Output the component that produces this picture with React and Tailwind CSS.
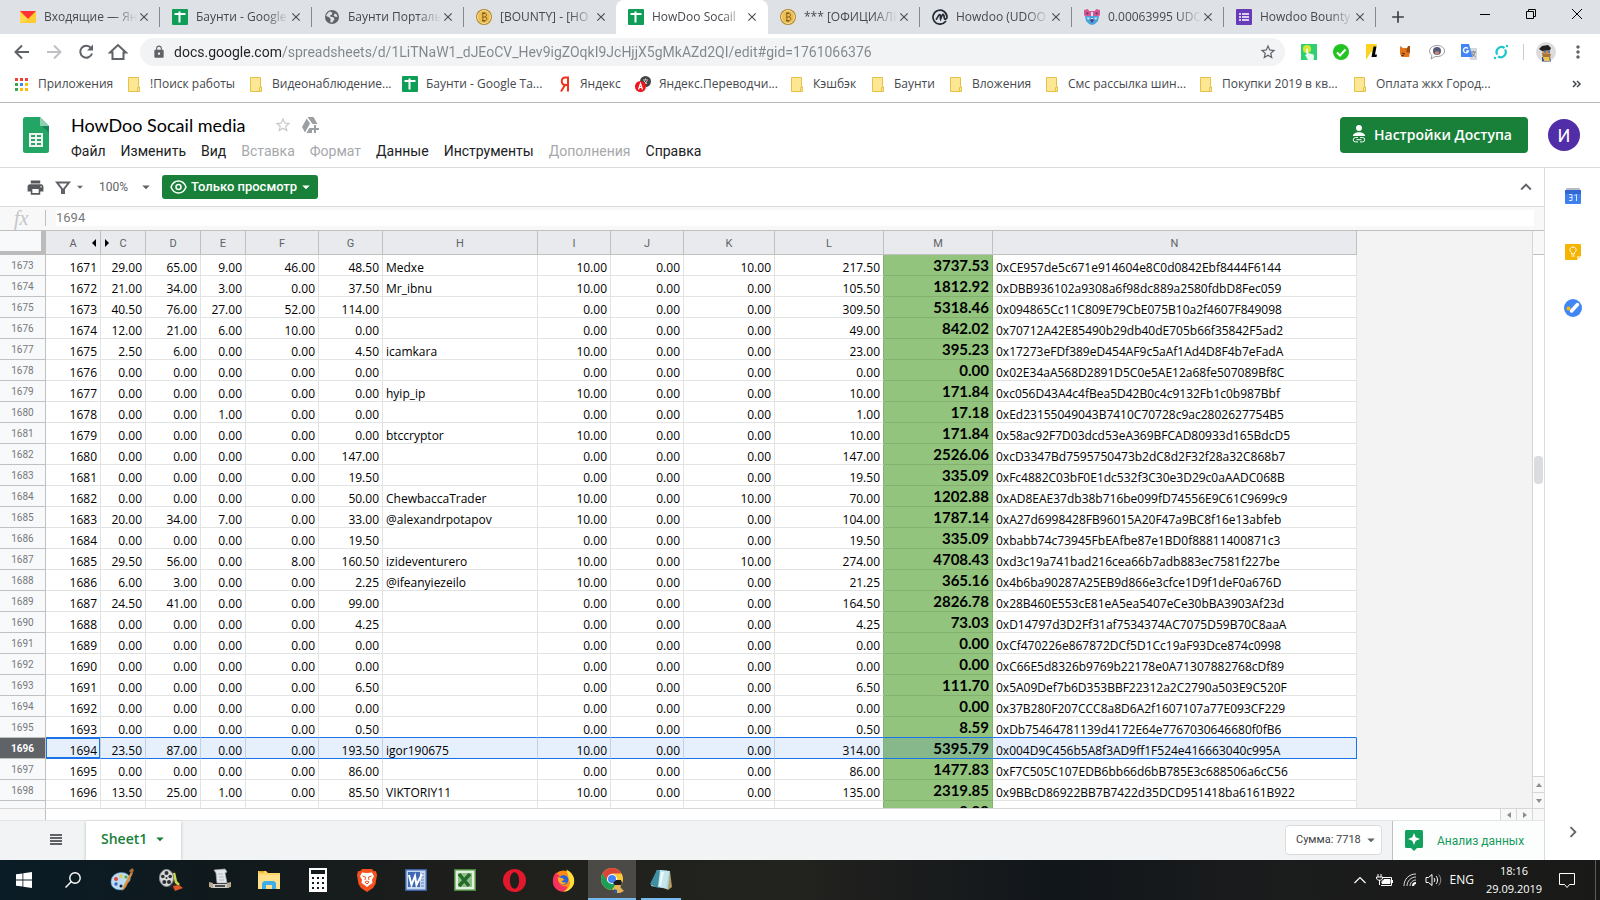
import { MdStarBorder, MdPrint, MdKeyboardArrowUp, MdKeyboardArrowRight, MdArrowDropDown, MdLock, MdClose, MdAdd, MdMoreVert } from 'react-icons/md';

const ROWS = [
  [1673, '1671', '29.00', '65.00', '9.00', '46.00', '48.50', 'Medxe', '10.00', '0.00', '10.00', '217.50', '3737.53', '0xCE957de5c671e914604e8C0d0842Ebf8444F6144'],
  [1674, '1672', '21.00', '34.00', '3.00', '0.00', '37.50', 'Mr_ibnu', '10.00', '0.00', '0.00', '105.50', '1812.92', '0xDBB936102a9308a6f98dc889a2580fdbD8Fec059'],
  [1675, '1673', '40.50', '76.00', '27.00', '52.00', '114.00', '', '0.00', '0.00', '0.00', '309.50', '5318.46', '0x094865Cc11C809E79CbE075B10a2f4607F849098'],
  [1676, '1674', '12.00', '21.00', '6.00', '10.00', '0.00', '', '0.00', '0.00', '0.00', '49.00', '842.02', '0x70712A42E85490b29db40dE705b66f35842F5ad2'],
  [1677, '1675', '2.50', '6.00', '0.00', '0.00', '4.50', 'icamkara', '10.00', '0.00', '0.00', '23.00', '395.23', '0x17273eFDf389eD454AF9c5aAf1Ad4D8F4b7eFadA'],
  [1678, '1676', '0.00', '0.00', '0.00', '0.00', '0.00', '', '0.00', '0.00', '0.00', '0.00', '0.00', '0x02E34aA568D2891D5C0e5AE12a68fe507089Bf8C'],
  [1679, '1677', '0.00', '0.00', '0.00', '0.00', '0.00', 'hyip_ip', '10.00', '0.00', '0.00', '10.00', '171.84', '0xc056D43A4c4fBea5D42B0c4c9132Fb1c0b987Bbf'],
  [1680, '1678', '0.00', '0.00', '1.00', '0.00', '0.00', '', '0.00', '0.00', '0.00', '1.00', '17.18', '0xEd23155049043B7410C70728c9ac2802627754B5'],
  [1681, '1679', '0.00', '0.00', '0.00', '0.00', '0.00', 'btccryptor', '10.00', '0.00', '0.00', '10.00', '171.84', '0x58ac92F7D03dcd53eA369BFCAD80933d165BdcD5'],
  [1682, '1680', '0.00', '0.00', '0.00', '0.00', '147.00', '', '0.00', '0.00', '0.00', '147.00', '2526.06', '0xcD3347Bd7595750473b2dC8d2F32f28a32C868b7'],
  [1683, '1681', '0.00', '0.00', '0.00', '0.00', '19.50', '', '0.00', '0.00', '0.00', '19.50', '335.09', '0xFc4882C03bF0E1dc532f3C30e3D29c0aAADC068B'],
  [1684, '1682', '0.00', '0.00', '0.00', '0.00', '50.00', 'ChewbaccaTrader', '10.00', '0.00', '10.00', '70.00', '1202.88', '0xAD8EAE37db38b716be099fD74556E9C61C9699c9'],
  [1685, '1683', '20.00', '34.00', '7.00', '0.00', '33.00', '@alexandrpotapov', '10.00', '0.00', '0.00', '104.00', '1787.14', '0xA27d6998428FB96015A20F47a9BC8f16e13abfeb'],
  [1686, '1684', '0.00', '0.00', '0.00', '0.00', '19.50', '', '0.00', '0.00', '0.00', '19.50', '335.09', '0xbabb74c73945FbEAfbe87e1BD0f88811400871c3'],
  [1687, '1685', '29.50', '56.00', '0.00', '8.00', '160.50', 'izideventurero', '10.00', '0.00', '10.00', '274.00', '4708.43', '0xd3c19a741bad216cea66b7adb883ec7581f227be'],
  [1688, '1686', '6.00', '3.00', '0.00', '0.00', '2.25', '@ifeanyiezeilo', '10.00', '0.00', '0.00', '21.25', '365.16', '0x4b6ba90287A25EB9d866e3cfce1D9f1deF0a676D'],
  [1689, '1687', '24.50', '41.00', '0.00', '0.00', '99.00', '', '0.00', '0.00', '0.00', '164.50', '2826.78', '0x28B460E553cE81eA5ea5407eCe30bBA3903Af23d'],
  [1690, '1688', '0.00', '0.00', '0.00', '0.00', '4.25', '', '0.00', '0.00', '0.00', '4.25', '73.03', '0xD14797d3D2Ff31af7534374AC7075D59B70C8aaA'],
  [1691, '1689', '0.00', '0.00', '0.00', '0.00', '0.00', '', '0.00', '0.00', '0.00', '0.00', '0.00', '0xCf470226e867872DCf5D1Cc19aF93Dce874c0998'],
  [1692, '1690', '0.00', '0.00', '0.00', '0.00', '0.00', '', '0.00', '0.00', '0.00', '0.00', '0.00', '0xC66E5d8326b9769b22178e0A71307882768cDf89'],
  [1693, '1691', '0.00', '0.00', '0.00', '0.00', '6.50', '', '0.00', '0.00', '0.00', '6.50', '111.70', '0x5A09Def7b6D353BBF22312a2C2790a503E9C520F'],
  [1694, '1692', '0.00', '0.00', '0.00', '0.00', '0.00', '', '0.00', '0.00', '0.00', '0.00', '0.00', '0x37B280F207CCC8a8D6A2f1607107a77E093CF229'],
  [1695, '1693', '0.00', '0.00', '0.00', '0.00', '0.50', '', '0.00', '0.00', '0.00', '0.50', '8.59', '0xDb75464781139d4172E64e7767030646680f0fB6'],
  [1696, '1694', '23.50', '87.00', '0.00', '0.00', '193.50', 'igor190675', '10.00', '0.00', '0.00', '314.00', '5395.79', '0x004D9C456b5A8f3AD9ff1F524e416663040c995A'],
  [1697, '1695', '0.00', '0.00', '0.00', '0.00', '86.00', '', '0.00', '0.00', '0.00', '86.00', '1477.83', '0xF7C505C107EDB6bb66d6bB785E3c688506a6cC56'],
  [1698, '1696', '13.50', '25.00', '1.00', '0.00', '85.50', 'VIKTORIY11', '10.00', '0.00', '0.00', '135.00', '2319.85', '0x9BBcD86922BB7B7422d35DCD951418ba6161B922'],
  ['', '', '', '', '', '', '', '', '', '', '', '', '0.00', ''],
];

const COLUMNS = [
  { name: 'A', width: 'w-[55px]' },
  { name: 'C', width: 'w-[45px]' },
  { name: 'D', width: 'w-[55px]' },
  { name: 'E', width: 'w-[45px]' },
  { name: 'F', width: 'w-[73px]' },
  { name: 'G', width: 'w-[64px]' },
  { name: 'H', width: 'w-[155px]' },
  { name: 'I', width: 'w-[73px]' },
  { name: 'J', width: 'w-[73px]' },
  { name: 'K', width: 'w-[91px]' },
  { name: 'L', width: 'w-[109px]' },
  { name: 'M', width: 'w-[109px]' },
  { name: 'N', width: 'w-[364px]' },
];

const SELECTED = 1696;

/* ---------- small icons ---------- */

function SheetsFavicon() {
  return (
    <svg width="16" height="16" viewBox="0 0 16 16" className="shrink-0">
      <rect width="16" height="16" rx="1" fill="#0f9d58" />
      <path d="M2.500 5h11M7.500 2.500v11" stroke="#fff" strokeWidth="2" />
    </svg>
  );
}

function MailIcon() {
  return (
    <svg width="16" height="16" viewBox="0 0 16 16" className="shrink-0">
      <rect y="2" width="16" height="12" fill="#fc3" />
      <path d="M0 2h16L8 10z" fill="#f33" />
      <path d="M0 14V3l8 7-8 4z" fill="#ffd84d" />
    </svg>
  );
}

function GlobeIcon() {
  return (
    <svg width="16" height="16" viewBox="0 0 16 16" className="shrink-0">
      <circle cx="8" cy="8" r="7" fill="#5f6368" />
      <path d="M6 2.500c-2 1-3.500 2.500-3.800 4.500l3 1.200 1.500 2-.5 3 2 .3 2.300-3.200-1-2-3-.6L6 6.500l2-1 .3-2zM11 4.500l-1.500 1.800 1.500 1.500 2.500.2-.8-2.500z" fill="#dee1e6" />
    </svg>
  );
}

function CoinIcon() {
  return (
    <svg width="16" height="16" viewBox="0 0 16 16" className="shrink-0">
      <circle cx="8" cy="8" r="8" fill="#b8862b" />
      <circle cx="8" cy="8" r="6.500" fill="#e9be55" stroke="#f8e08f" />
      <path d="M6 4.500h3c2 0 2 3.200 0 3.400 2.500 0 2.500 3.600 0 3.600H6M6.800 4.500v7M6.800 8H9M7 3v1.500M8.600 3v1.500M7 11.500V13M8.600 11.500V13" stroke="#8a5d12" strokeWidth="1" fill="none" />
    </svg>
  );
}

function CoinMarketIcon() {
  return (
    <svg width="16" height="16" viewBox="0 0 16 16" className="shrink-0" fill="none" stroke="#222a35" strokeWidth="1.700" strokeLinecap="round">
      <path d="M13.500 12.500A7 7 0 1 1 15 8c0 2.500-2.800 3-2.800.6 0-2-.6-3.600-1.600-3-.9.600-1.300 3-2 4.400-.4-1.600.2-4.400-1-4.400-1.300 0-2 3.400-3.200 4.600" />
    </svg>
  );
}

function BearIcon() {
  return (
    <svg width="16" height="16" viewBox="0 0 16 16" className="shrink-0">
      <path d="M0 1l4-1 1 2h6l1-2 4 1v5l-2 2H2L0 6z" fill="#d9568f" />
      <path d="M1 7h14l-1 5-3 3-3 1-3-1-3-3z" fill="#4aa3dc" />
      <path d="M2 3l3 1-2 2zM14 3l-3 1 2 2zM6 11l2-1 2 1-2 3z" fill="#5b3a78" />
      <path d="M7 3h2v4H7zM3 8l3 1-2 2zM13 8l-3 1 2 2zM7 9h2v1H7z" fill="#cfe3f5" />
    </svg>
  );
}

function FormsIcon() {
  return (
    <svg width="16" height="16" viewBox="0 0 16 16" className="shrink-0">
      <rect width="16" height="16" rx="1" fill="#673ab7" />
      <path d="M3 5h2M3 8h2M3 11h2M6 5h7M6 8h7M6 11h7" stroke="#fff" strokeWidth="1.600" />
    </svg>
  );
}

function FolderIcon() {
  return (
    <svg width="12" height="15" viewBox="0 0 12 15" className="shrink-0">
      <path d="M.5.5h10v9l1 .5v4.500H.5z" fill="#fee793" stroke="#e5c04a" />
      <path d="M9.500 14v-3.500l2-.5" fill="none" stroke="#e5c04a" />
    </svg>
  );
}

function AppsIcon() {
  const colors = ['#ea4335', '#ea4335', '#ea4335', '#34a853', '#4285f4', '#fbbc05', '#34a853', '#fbbc05', '#fbbc05'];
  return (
    <svg width="13" height="13" viewBox="0 0 13 13" className="shrink-0">
      {colors.map((c, i) => (
        <rect key={i} x={(i % 3) * 5} y={Math.floor(i / 3) * 5} width="3" height="3" fill={c} />
      ))}
    </svg>
  );
}

function YandexIcon() {
  return (
    <svg width="10" height="16" viewBox="0 0 10 16" className="shrink-0">
      <path d="M8 .5v15M8 1.500H5.500C.5 1.500.5 9 5.500 9H8M5 9l-4 6.500" stroke="#f33219" strokeWidth="2" fill="none" />
    </svg>
  );
}

function YandexTranslateIcon() {
  return (
    <svg width="16" height="16" viewBox="0 0 16 16" className="shrink-0">
      <circle cx="10.500" cy="5.500" r="5.500" fill="#444" />
      <path d="M8 4h5M10.500 2.500V4M9 5l3 3M12 5l-2 3" stroke="#ccc" fill="none" />
      <circle cx="5.500" cy="10.500" r="5.500" fill="#f0141e" />
      <path d="M3.500 13.500l2-6 2 6M4 11.500h3" stroke="#fff" strokeWidth="1.200" fill="none" />
    </svg>
  );
}

/* ---------- browser ---------- */

const TABS = [
  { title: 'Входящие — Ян', icon: <MailIcon />, line: true },
  { title: 'Баунти - Google', icon: <SheetsFavicon />, line: true },
  { title: 'Баунти Порталь', icon: <GlobeIcon />, line: true },
  { title: '[BOUNTY] - [HO', icon: <CoinIcon /> },
  { title: 'HowDoo Socail', icon: <SheetsFavicon />, active: true },
  { title: '*** [ОФИЦИАЛЬ', icon: <CoinIcon />, line: true },
  { title: 'Howdoo (UDOO', icon: <CoinMarketIcon />, line: true },
  { title: '0.00063995 UDO', icon: <BearIcon />, line: true },
  { title: 'Howdoo Bounty', icon: <FormsIcon />, line: true },
];

function TabStrip() {
  return (
    <div className="flex h-[34px] shrink-0 bg-[#dee1e6] pl-2">
      {TABS.map((tab) => (
        <div
          key={tab.title}
          className={
            tab.active
              ? 'flex w-[152px] min-w-0 items-center rounded-t-lg bg-white pl-3 pr-px'
              : 'flex w-[152px] min-w-0 items-center pl-3'
          }
        >
          {tab.icon}
          <span className="ml-2 min-w-0 flex-1 whitespace-nowrap text-[12px] text-[#45494d] [mask-image:linear-gradient(to_right,#000_75%,transparent)]">
            {tab.title}
          </span>
          <button type="button" aria-label="Закрыть вкладку" className="mr-2 text-[#4b4f54]">
            <MdClose size={14} />
          </button>
          {tab.line && <span className="h-5 w-px bg-[#85888c]" />}
        </div>
      ))}
      <button type="button" aria-label="Новая вкладка" className="ml-3 text-[#3c4043]">
        <MdAdd size={20} />
      </button>
      <div className="ml-auto flex pb-1.5">
        <button type="button" aria-label="Свернуть" className="flex w-[46px] items-center justify-center">
          <svg width="10" height="10" viewBox="0 0 10 10"><path d="M0 5.500h10" stroke="#000" /></svg>
        </button>
        <button type="button" aria-label="Развернуть" className="flex w-[46px] items-center justify-center">
          <svg width="10" height="10" viewBox="0 0 10 10" fill="none" stroke="#000"><path d="M.5 2.500h7v7h-7zM2.500 2.500v-2h7v7h-2" /></svg>
        </button>
        <button type="button" aria-label="Закрыть" className="flex w-[46px] items-center justify-center">
          <svg width="10" height="10" viewBox="0 0 10 10"><path d="M0 0l10 10M10 0L0 10" stroke="#000" /></svg>
        </button>
      </div>
    </div>
  );
}

function Extensions() {
  return (
    <div className="flex items-center gap-4">
      <svg width="16" height="16" viewBox="0 0 16 16">
        <rect width="16" height="16" fill="#2fd072" />
        <circle cx="6" cy="5" r="4" fill="#d8e632" />
        <path d="M5 5.500c0-1.500 2-1.500 2 0V9l5 1.200c1.500.5 1 3.300.5 5.800H7l-3-5 1.500-.5z" fill="#eafff2" />
      </svg>
      <svg width="16" height="16" viewBox="0 0 16 16">
        <circle cx="8" cy="8" r="8" fill="#21c421" />
        <path d="M4 8.500l3 3 5.500-6" stroke="#fff" strokeWidth="2" fill="none" />
      </svg>
      <svg width="16" height="16" viewBox="0 0 16 16">
        <path d="M1 0h11l-2 7-4 1-5 8z" fill="#ffd21f" />
        <path d="M8.500 2.500h3l-1.500 8h2l-.5 2.500H6.500z" fill="#000" />
      </svg>
      <svg width="16" height="16" viewBox="0 0 16 16">
        <path d="M3 2l3 2h4l3-2v6l-1 5H5L3 10z" fill="#e2761b" />
        <path d="M9 7l2-5h2v6l-2 1z" fill="#9c4a14" />
        <path d="M5 9l3 1M4 12l3-1" stroke="#5c2a0a" />
      </svg>
      <svg width="16" height="16" viewBox="0 0 16 16">
        <path d="M8 1.500c10 0 10 11 0 11-1.500 0-3 0-4 1.500L2 15l1-3.500C-2 8 1 1.500 8 1.500z" fill="#fff" stroke="#9a9a9a" />
        <circle cx="8" cy="7" r="4" fill="#555a78" />
        <path d="M6 7.500h4v3H6z" fill="#c58a6f" />
      </svg>
      <svg width="16" height="16" viewBox="0 0 16 16">
        <path d="M6 4h10v12H9z" fill="#d5d8dc" />
        <path d="M0 0h8l3.500 13H0z" fill="#4285f4" />
        <path d="M7 4.500A2.600 2.600 0 1 0 7.500 7H5.200" stroke="#fff" strokeWidth="1.300" fill="none" />
        <path d="M10 8h5M12.500 7v1M14 8c-.5 2.500-2 4-3 4.500M11 9c.5 1.500 2 3 3.500 3.500" stroke="#7a828c" fill="none" />
      </svg>
      <svg width="16" height="16" viewBox="0 0 16 16" fill="none" stroke="#1fc5c9" strokeWidth="2.200">
        <path d="M11.500 4A5 5 0 0 0 4.200 10.500M5 12.300A5 5 0 0 0 12 5.500" />
        <circle cx="14" cy="2" r="1.200" fill="#1fc5c9" stroke="none" />
        <circle cx="2" cy="14" r="1.200" fill="#1fc5c9" stroke="none" />
      </svg>
    </div>
  );
}

function ProfilePicture({ size }) {
  return (
    <svg width={size} height={size} viewBox="0 0 20 20">
      <circle cx="10" cy="10" r="10" fill="#dcdcdc" />
      <path d="M6 15l8 0 1 4.500H6z" fill="#2c4f97" />
      <path d="M6 7h8v7l-3 3-4-2z" fill="#c98d50" />
      <path d="M6 11l3 1 4 0 2 0-1 4-3 2-4-2z" fill="#a8743a" />
      <path d="M7 15h6l1 4H8z" fill="#efc24e" />
      <path d="M3 7l3-3 6-1 3 3-1 2-8 1z" fill="#1f1f1f" />
      <path d="M8 9.500h2M12 9.500h2" stroke="#3a78c4" strokeWidth="2" />
    </svg>
  );
}

function AddressBar() {
  return (
    <div className="flex h-9 shrink-0 items-center bg-white pl-3 pr-3">
      <div className="flex w-32 items-center gap-3 text-[#5f6368]">
        <button type="button" aria-label="Назад">
          <svg width="20" height="20" viewBox="0 0 20 20" fill="none" stroke="#5f6368" strokeWidth="2"><path d="M17 10H4M10 3.500L3.500 10l6.500 6.500" /></svg>
        </button>
        <button type="button" aria-label="Вперёд">
          <svg width="20" height="20" viewBox="0 0 20 20" fill="none" stroke="#bfc1c4" strokeWidth="2"><path d="M3 10h13M10 3.500l6.500 6.500-6.500 6.500" /></svg>
        </button>
        <button type="button" aria-label="Обновить">
          <svg width="20" height="20" viewBox="0 0 20 20" fill="none" stroke="#5f6368" strokeWidth="2"><path d="M15 6A6 6 0 1 0 16 11.500" /><path d="M17 2.500v6h-6z" fill="#5f6368" stroke="none" /></svg>
        </button>
        <button type="button" aria-label="Главная">
          <svg width="20" height="20" viewBox="0 0 20 20" fill="none" stroke="#5f6368" strokeWidth="2"><path d="M2 10.500l8-7.500 8 7.500h-2.500V17h-11v-6.500z" /></svg>
        </button>
      </div>
      <div className="flex h-7 min-w-0 flex-1 items-center rounded-full bg-[#f1f3f4] pl-3 pr-2">
        <MdLock size={14} className="shrink-0 text-[#5f6368]" />
        <input
          aria-label="Адрес"
          className="ml-2 min-w-0 flex-1 bg-[linear-gradient(to_right,#202124_107px,#80868b_107px)] bg-clip-text font-[Roboto,sans-serif] text-[14px] text-transparent outline-none"
          defaultValue="docs.google.com/spreadsheets/d/1LiTNaW1_dJEoCV_Hev9igZOqkI9JcHjjX5gMkAZd2QI/edit#gid=1761066376"
        />
        <button type="button" aria-label="Добавить в закладки" className="text-[#5f6368]">
          <MdStarBorder size={18} />
        </button>
      </div>
      <div className="ml-4 flex items-center">
        <Extensions />
        <span className="ml-3.5 h-4 w-px bg-[#c8cacc]" />
        <button type="button" aria-label="Профиль" className="ml-3">
          <ProfilePicture size={20} />
        </button>
        <button type="button" aria-label="Меню браузера" className="ml-3 text-[#5f6368]">
          <MdMoreVert size={20} />
        </button>
      </div>
    </div>
  );
}

const BOOKMARKS = [
  { title: 'Приложения', icon: <AppsIcon />, width: 'w-[113px]', gap: 'gap-2.5' },
  { title: '!Поиск работы', icon: <FolderIcon />, width: 'w-[122px]', gap: 'gap-2.5' },
  { title: 'Видеонаблюдение...', icon: <FolderIcon />, width: 'w-[152px]', gap: 'gap-2.5' },
  { title: 'Баунти - Google Та...', icon: <SheetsFavicon />, width: 'w-[158px]', gap: 'gap-2' },
  { title: 'Яндекс', icon: <YandexIcon />, width: 'w-[75px]', gap: 'gap-2.5' },
  { title: 'Яндекс.Переводчи...', icon: <YandexTranslateIcon />, width: 'w-[156px]', gap: 'gap-2' },
  { title: 'Кэшбэк', icon: <FolderIcon />, width: 'w-[81px]', gap: 'gap-2.5' },
  { title: 'Баунти', icon: <FolderIcon />, width: 'w-[78px]', gap: 'gap-2.5' },
  { title: 'Вложения', icon: <FolderIcon />, width: 'w-[96px]', gap: 'gap-2.5' },
  { title: 'Смс рассылка шин...', icon: <FolderIcon />, width: 'w-[154px]', gap: 'gap-2.5' },
  { title: 'Покупки 2019 в кв...', icon: <FolderIcon />, width: 'w-[154px]', gap: 'gap-2.5' },
  { title: 'Оплата жкх Город...', icon: <FolderIcon />, width: 'w-[154px]', gap: 'gap-2.5' },
];

function BookmarksBar() {
  return (
    <div className="flex h-[33px] shrink-0 items-center border-b border-[#b6b8ba] bg-white pb-1 pl-[15px] pr-[18px]">
      {BOOKMARKS.map((b) => (
        <div key={b.title} className={b.width}>
          <a href="#" className={`flex items-center whitespace-nowrap text-[12px] text-[#45494d] ${b.gap}`}>
            {b.icon}
            {b.title}
          </a>
        </div>
      ))}
      <button type="button" aria-label="Другие закладки" className="ml-auto">
        <svg width="10" height="8" viewBox="0 0 10 8" fill="none" stroke="#45494d" strokeWidth="1.500"><path d="M1 1l3 3-3 3M5 1l3 3-3 3" /></svg>
      </button>
    </div>
  );
}

/* ---------- sheets header ---------- */

const MENU = [
  { title: 'Файл' },
  { title: 'Изменить' },
  { title: 'Вид' },
  { title: 'Вставка', disabled: true },
  { title: 'Формат', disabled: true },
  { title: 'Данные' },
  { title: 'Инструменты' },
  { title: 'Дополнения', disabled: true },
  { title: 'Справка' },
];

function DocHeader() {
  return (
    <header className="flex h-[65px] shrink-0 border-b border-[#dadce0] bg-white pl-[23px] pr-5">
      <svg width="26" height="36" viewBox="0 0 26 36" className="mt-3.5 shrink-0">
        <path d="M2.500 0H17l9 9v24.500a2.500 2.500 0 0 1-2.500 2.500h-21A2.500 2.500 0 0 1 0 33.500v-31A2.500 2.500 0 0 1 2.500 0z" fill="#23a566" />
        <path d="M17 0l9 9h-9z" fill="#8ed1b1" />
        <path d="M19 9h7v7z" fill="#16865a" />
        <path d="M6 16h14v14H6z" fill="#f1f1f1" />
        <path d="M8 18h4v2H8zM14 18h4v2h-4zM8 22h4v2H8zM14 22h4v2h-4zM8 26h4v2H8zM14 26h4v2h-4z" fill="#23a566" />
      </svg>
      <div className="ml-[22px] mt-2.5">
        <div className="flex h-6 items-center">
          <h1 className="w-[203px] font-[Lato,sans-serif] text-[18px] leading-6 text-black">HowDoo Socail media</h1>
          <button type="button" aria-label="Пометить" className="text-[#c6c8ca]">
            <MdStarBorder size={18} />
          </button>
          <button type="button" aria-label="Добавить на Диск" className="ml-2.5">
            <svg width="18" height="17" viewBox="0 0 18 17" fill="#9b9ea2">
              <path d="M5.500 0h6l4 7h-5zM4.700 1.500L0 10l3 5.500L8 6.500zM4.500 16l2.800-5H10v5zM12 8h2v3h3v2h-3v3h-2v-3H9v-2h3z" />
            </svg>
          </button>
        </div>
        <nav className="mt-1 flex gap-[15px] font-[Roboto,sans-serif] text-[14px] leading-5">
          {MENU.map((m) => (
            <button
              key={m.title}
              type="button"
              disabled={m.disabled}
              className={m.disabled ? 'text-[#a6a8ab]' : 'text-[#202124]'}
            >
              {m.title}
            </button>
          ))}
        </nav>
      </div>
      <button
        type="button"
        className="ml-auto mt-3.5 flex h-9 w-[188px] items-center gap-2 whitespace-nowrap rounded bg-[#188038] pb-0.5 pl-3 text-[14px] font-semibold text-white"
      >
        <svg width="14" height="18" viewBox="0 0 14 18" className="shrink-0">
          <circle cx="7" cy="3" r="3" fill="#fff" />
          <path d="M1 11c0-5 12-5 12 0z" fill="#fff" />
          <path d="M6 12.500H3.500a2.200 2.200 0 0 0 0 4.400H6M8 12.500h2.500a2.200 2.200 0 0 1 0 4.400H8M4.500 14.700h5" stroke="#fff" fill="none" />
        </svg>
        Настройки Доступа
      </button>
      <button
        type="button"
        aria-label="Аккаунт"
        className="ml-5 mt-4 flex size-8 items-center justify-center rounded-full bg-[#512da8] font-[Roboto,sans-serif] text-[18px] text-white"
      >
        И
      </button>
    </header>
  );
}

function Toolbar() {
  return (
    <div className="flex h-[39px] shrink-0 items-center border-b border-[#dadce0] bg-white pl-[26px] pr-[7px]">
      <button type="button" aria-label="Печать" className="text-[#55585c]">
        <MdPrint size={19} />
      </button>
      <button type="button" aria-label="Фильтр" className="ml-2.5 flex items-center text-[#5f6368]">
        <svg width="16" height="13" viewBox="0 0 16 13" fill="none" stroke="#5f6368" strokeWidth="2"><path d="M2 1.500h12L9 8v4.500H7V8z" /></svg>
        <MdArrowDropDown size={14} className="ml-0.5" />
      </button>
      <div className="ml-3 flex items-center">
        <select aria-label="Масштаб" className="w-10 appearance-none font-[Roboto,sans-serif] text-[12px] text-[#5f6368]">
          <option>100%</option>
        </select>
        <MdArrowDropDown size={18} className="-ml-0.5 text-[#5f6368]" />
      </div>
      <button
        type="button"
        className="ml-[7px] flex h-6 w-[156px] items-center whitespace-nowrap rounded-[3px] bg-[#188038] pl-2 font-[Roboto,sans-serif] text-[13px] font-medium text-white"
      >
        <svg width="17" height="16" viewBox="0 0 17 16" fill="none" stroke="#fff" strokeWidth="1.500" className="shrink-0">
          <path d="M1 8c3-8 12-8 15 0-3 8-12 8-15 0z" />
          <circle cx="8.500" cy="8" r="2.500" />
        </svg>
        <span className="ml-1">Только просмотр</span>
        <MdArrowDropDown size={18} className="shrink-0" />
      </button>
      <button type="button" aria-label="Скрыть меню" className="ml-auto text-[#5f6368]">
        <MdKeyboardArrowUp size={22} />
      </button>
    </div>
  );
}

function FormulaBar() {
  return (
    <div className="flex h-6 shrink-0 items-center border-b border-[#c0c0c0] bg-[#f8f8f8] pb-0.5 pr-2.5">
      <label
        htmlFor="formula"
        className="w-[45px] pl-3.5 font-['Liberation_Serif',serif] text-[20px] italic leading-5 text-[#c4c6c8]"
      >
        fx
      </label>
      <span className="h-4 w-px bg-[#c0c0c0]" />
      <input
        id="formula"
        className="ml-2.5 h-4 min-w-0 flex-1 bg-white font-[Roboto,sans-serif] text-[13px] text-[#777a7d] outline-none"
        defaultValue="1694"
      />
    </div>
  );
}

/* ---------- grid ---------- */

function cellClass(col, row, next) {
  const selected = row === SELECTED;
  const blueLine = selected || next === SELECTED;
  let cls = 'h-[21px] overflow-hidden whitespace-nowrap border-b border-r p-0 px-[3px] ';

  if (col === 'M') {
    cls += 'align-top text-right font-[Lato,sans-serif] text-[15px] leading-5 font-bold text-black ';
    cls += selected ? 'bg-[#86b88c] border-r-[#7ba97c] ' : 'bg-[#93c47d] border-r-[#84b070] ';
    cls += blueLine ? 'border-b-[#1a73e8]' : 'border-b-[#84b070]';
    return cls;
  }

  cls += 'align-bottom text-[12px] leading-[15px] text-black ';
  cls += col === 'H' || col === 'N' ? 'text-left ' : 'text-right ';
  cls += selected ? 'bg-[#e6effc] ' : 'bg-white ';
  if (col === 'L') cls += 'border-r-[#84b070] ';
  else if (selected && col === 'N') cls += 'border-r-[#1a73e8] ';
  else cls += selected ? 'border-r-[#c5cfdd] ' : 'border-r-[#e2e3e3] ';
  cls += blueLine ? 'border-b-[#1a73e8]' : 'border-b-[#e2e3e3]';
  if (selected && col === 'A') cls += ' shadow-[inset_0_0_0_1px_#1a73e8]';
  return cls;
}

function Grid() {
  return (
    <div className="min-h-0 min-w-0 flex-1 overflow-hidden border-b border-r border-[#d5d6d7] bg-[#f3f3f3]">
      <table className="w-[1357px] table-fixed border-separate border-spacing-0">
        <thead>
          <tr>
            <th aria-label="Выбрать всё" className="h-6 w-[46px] border-b-4 border-r-[5px] border-[#bcbcbc] bg-[#f8f9fa] p-0" />
            {COLUMNS.map((c) => (
              <th
                key={c.name}
                className={`relative h-6 border-b border-r border-[#c0c0c0] bg-[#e8eaed] p-0 pt-0.5 font-[Roboto,sans-serif] text-[11px] leading-4 font-normal text-[#5f6368] ${c.width}`}
              >
                {c.name}
                {c.name === 'A' && (
                  <svg width="4" height="8" viewBox="0 0 4 8" className="absolute right-1 top-2"><path d="M4 0v8L0 4z" /></svg>
                )}
                {c.name === 'C' && (
                  <svg width="4" height="8" viewBox="0 0 4 8" className="absolute left-1 top-2"><path d="M0 0v8l4-4z" /></svg>
                )}
              </th>
            ))}
          </tr>
        </thead>
        <tbody>
          {ROWS.map(([num, ...cells], i) => (
            <tr key={i}>
              <th
                className={
                  num === SELECTED
                    ? 'h-[21px] border-b border-r border-[#c0c0c0] bg-[#5f6368] p-0 font-[Roboto,sans-serif] text-[10px] font-bold text-white'
                    : 'h-[21px] border-b border-r border-[#c0c0c0] bg-[#f8f9fa] p-0 font-[Roboto,sans-serif] text-[10px] font-normal text-[#76797d]'
                }
              >
                {num}
              </th>
              {cells.map((value, j) => (
                <td key={j} className={cellClass(COLUMNS[j].name, num, ROWS[i + 1]?.[0])}>
                  {value}
                </td>
              ))}
            </tr>
          ))}
        </tbody>
      </table>
    </div>
  );
}

function Arrow({ d }) {
  return (
    <svg width="6" height="6" viewBox="0 0 6 6" fill="#8b8d90"><path d={d} /></svg>
  );
}

function VerticalScroll() {
  return (
    <div className="flex w-[11px] shrink-0 flex-col border-b border-[#d5d6d7] bg-white">
      <div className="h-6 shrink-0 border-b border-[#c0c0c0] bg-[#f8f8f8]" />
      <div className="flex-[201]" />
      <div className="mx-px h-7 rounded bg-[#dadce0]" />
      <div className="flex-[293]" />
      <button type="button" aria-label="Вверх" className="flex h-4 items-center justify-center border-t border-[#d5d6d7] bg-[#f8f8f8]">
        <Arrow d="M0 5h6L3 1z" />
      </button>
      <button type="button" aria-label="Вниз" className="flex h-4 items-center justify-center border-t border-[#d5d6d7] bg-[#f8f8f8]">
        <Arrow d="M0 1h6L3 5z" />
      </button>
    </div>
  );
}

function HorizontalScroll() {
  return (
    <div className="flex h-3 shrink-0 border-b border-[#e3e5e8] bg-white">
      <div className="w-[46px] border-r border-[#c0c0c0] bg-[#f8f8f8]" />
      <div className="flex-1" />
      <button type="button" aria-label="Влево" className="flex w-4 items-center justify-center border-l border-[#d5d6d7] bg-[#f8f8f8]">
        <Arrow d="M5 0v6L1 3z" />
      </button>
      <button type="button" aria-label="Вправо" className="flex w-4 items-center justify-center border-l border-[#d5d6d7] bg-[#f8f8f8]">
        <Arrow d="M1 0v6l4-3z" />
      </button>
      <div className="w-3 border-l border-[#d5d6d7] bg-[#f8f8f8]" />
    </div>
  );
}

function SheetBar() {
  return (
    <div className="flex h-[39px] shrink-0 bg-[#f1f3f4]">
      <button type="button" aria-label="Все листы" className="flex w-[86px] items-center pb-0.5 pl-[50px]">
        <svg width="12" height="11" viewBox="0 0 12 11" fill="#5f6368"><path d="M0 0h12v2H0zM0 3h12v2H0zM0 6h12v2H0zM0 9h12v2H0z" /></svg>
      </button>
      <button type="button" className="flex w-[95px] items-center bg-white pb-1 pl-[15px] text-[14px] font-semibold text-[#188038] shadow-[0_1px_3px_rgba(60,64,67,0.3)]">
        Sheet1
        <MdArrowDropDown size={18} className="ml-1" />
      </button>
      <div className="ml-auto mr-2.5 mt-1 flex h-[30px] w-[97px] items-center rounded border border-[#dadce0] bg-white pl-2.5">
        <select aria-label="Итог" className="w-[70px] shrink-0 appearance-none font-[Roboto,sans-serif] text-[11px] text-[#3c4043]">
          <option>Сумма: 7718</option>
        </select>
        <MdArrowDropDown size={18} className="-ml-1 shrink-0 text-[#5f6368]" />
      </div>
      <button
        type="button"
        className="flex w-[152px] items-center gap-3.5 whitespace-nowrap border-l border-[#c0c0c0] bg-[#fcfefd] pl-3 font-[Roboto,sans-serif] text-[12px] text-[#159a5b]"
      >
        <svg width="18" height="21" viewBox="0 0 18 21" className="shrink-0">
          <path d="M1.500 0h15A1.500 1.500 0 0 1 18 1.500v15a1.500 1.500 0 0 1-1.500 1.500H12l-3 3-3-3H1.500A1.500 1.500 0 0 1 0 16.500v-15A1.500 1.500 0 0 1 1.500 0z" fill="#12a05c" />
          <path d="M9 3l1.700 4.300L15 9l-4.300 1.700L9 15l-1.700-4.300L3 9l4.300-1.700z" fill="#fff" />
        </svg>
        Анализ данных
      </button>
    </div>
  );
}

function SidePanel() {
  return (
    <aside className="flex w-14 shrink-0 flex-col items-center border-l border-[#dadce0] bg-white pt-5">
      <button type="button" aria-label="Календарь">
        <svg width="16" height="16" viewBox="0 0 16 16">
          <rect x="1" width="14" height="4" rx="1" fill="#b8bcc2" />
          <path d="M0 2h16v5H0z" fill="#3367d6" />
          <path d="M0 6h16v9a1 1 0 0 1-1 1H1a1 1 0 0 1-1-1z" fill="#4080ee" />
          <path d="M4 6.500h3v6H4M4.500 9.500H7M9.500 7.500L11.500 6.500v6.500" stroke="#dbe7ff" fill="none" />
        </svg>
      </button>
      <button type="button" aria-label="Keep" className="mt-10">
        <svg width="16" height="16" viewBox="0 0 16 16">
          <path d="M1 0h14a1 1 0 0 1 1 1v11l-4 4H1a1 1 0 0 1-1-1V1a1 1 0 0 1 1-1z" fill="#f5b400" />
          <path d="M16 12v0l-4 4v-4z" fill="#fde293" />
          <path d="M6.500 10V8.500C3.500 6.500 5 3 8 3s4.500 3.500 1.500 5.500V10zM6.500 12h3" stroke="#fff" fill="none" />
        </svg>
      </button>
      <button type="button" aria-label="Задачи" className="mt-[39px]">
        <svg width="18" height="18" viewBox="0 0 18 18">
          <circle cx="9" cy="9" r="9" fill="#4285f4" />
          <path d="M7.500 12l6-6.500" stroke="#fff" strokeWidth="3.500" strokeLinecap="round" />
          <circle cx="4.500" cy="9.500" r="2" fill="#fbbc04" />
        </svg>
      </button>
      <button type="button" aria-label="Скрыть панель" className="mb-[17px] mt-auto text-[#5f6368]">
        <MdKeyboardArrowRight size={22} />
      </button>
    </aside>
  );
}

/* ---------- windows taskbar ---------- */

const TASKS = [
  {
    name: 'Пуск',
    icon: (
      <svg width="16" height="16" viewBox="0 0 16 16" fill="#fff"><path d="M0 2.300l6.500-.9v6.200H0zM7.300 1.300L16 0v7.600H7.300zM0 8.400h6.500v6.200L0 13.700zM7.300 8.400H16V16l-8.700-1.300z" /></svg>
    ),
  },
  {
    name: 'Поиск',
    icon: (
      <svg width="16" height="16" viewBox="0 0 16 16" fill="none" stroke="#fff" strokeWidth="1.400"><circle cx="10" cy="6" r="5.200" /><path d="M6.200 9.800L.5 15.500" /></svg>
    ),
  },
  {
    name: 'Paint',
    icon: (
      <svg width="24" height="24" viewBox="0 0 24 24">
        <path d="M1 14C1 7 8 3 15 5c6 2 7 8 2 10-3 1-1 4-3 6-3 2-13 1-13-7z" fill="#b9dcf0" stroke="#5c93b8" strokeWidth=".6" />
        <circle cx="6" cy="11" r="2" fill="#e2453c" /><circle cx="11" cy="8" r="1.800" fill="#f3c73b" /><circle cx="16" cy="9" r="1.600" fill="#56a839" />
        <circle cx="6" cy="16" r="1.700" fill="#3a62c9" /><circle cx="11" cy="18" r="1.500" fill="#16212b" />
        <path d="M21 4l2 1-7 14-4 4 2-6z" fill="#e08b3a" /><path d="M19 3l3-3 2 2-2 4z" fill="#a86a3d" />
      </svg>
    ),
  },
  {
    name: 'Видео',
    icon: (
      <svg width="24" height="24" viewBox="0 0 24 24">
        <path d="M10 2l6 1 2 11 4 4-7 4-7-4z" fill="#252525" />
        <path d="M15 5l2 9 3 3" stroke="#c9d84a" strokeWidth="2.500" fill="none" />
        <path d="M14 18l6-1 4 3-8 3z" fill="#e5552a" />
        <ellipse cx="7.500" cy="10" rx="7" ry="8.500" fill="#d7d9db" stroke="#8c8f92" />
        <g fill="#2d2f31"><circle cx="7.500" cy="5" r="2" /><circle cx="3.800" cy="8.500" r="1.800" /><circle cx="11.200" cy="8.500" r="1.800" /><circle cx="5.300" cy="14" r="2" /><circle cx="10" cy="14" r="2" /><circle cx="7.500" cy="10" r="1" /></g>
      </svg>
    ),
  },
  {
    name: 'Сканер',
    icon: (
      <svg width="24" height="24" viewBox="0 0 24 24">
        <path d="M6 2l11-1 2 3-2 1 2 10H9L8 5z" fill="#e4e7ea" stroke="#a6abb0" strokeWidth=".7" />
        <path d="M10 6h5M11 9h5M11 12h5" stroke="#b4b9be" />
        <path d="M3 16h18v4H3z" fill="#d0cec8" /><path d="M1 14l4 1v5l-4-1zM23 14l-4 1v5l4-1z" fill="#b8aa92" /><path d="M7 17h10v2H7z" fill="#4a4b4c" />
      </svg>
    ),
  },
  {
    name: 'Проводник',
    icon: (
      <svg width="22" height="20" viewBox="0 0 22 20">
        <path d="M0 1h8l2 2h12v16H0z" fill="#fcd668" /><path d="M0 5h22v14H0z" fill="#ffe18d" />
        <path d="M1 1h5v1.500H1z" fill="#e8a928" /><path d="M4 19v-6l2-2h10l2 2v6h-4v-4H8v4z" fill="#3faee8" />
      </svg>
    ),
  },
  {
    name: 'Калькулятор',
    icon: (
      <svg width="18" height="24" viewBox="0 0 18 24">
        <path d="M0 0h18v24H0z" fill="#fff" /><path d="M2 2h14v4H2z" fill="#111a1e" />
        <path d="M3 9h2v2H3zM8 9h2v2H8zM13 9h2v2h-2zM3 14h2v2H3zM8 14h2v2H8zM13 14h2v2h-2zM3 19h2v2H3zM8 19h2v2H8zM13 19h2v2h-2z" fill="#111a1e" />
      </svg>
    ),
  },
  {
    name: 'Brave',
    icon: (
      <svg width="20" height="23" viewBox="0 0 20 23">
        <path d="M5 0h10l2 2.200 2-.2 1 4-1.500 9L16 19l-6 4-6-4-2.500-4L0 6l1-4 2 .2z" fill="#f4511e" />
        <path d="M10 4l5-.5 2 4-2 3 .5 3.500-3 2L10 18l-2.500-2-3-2L5 10.500 3 7.500l2-4z" fill="#fff" />
        <path d="M5.500 7l3 1-.5 3M14.500 7l-3 1 .5 3M8 13l2-1 2 1-2 2z" stroke="#f4511e" fill="none" />
      </svg>
    ),
  },
  {
    name: 'Word',
    icon: (
      <svg width="22" height="22" viewBox="0 0 22 22">
        <path d="M0 0h22v22H0z" fill="#3b62a8" /><path d="M1.500 1.500h19v19h-19z" fill="#c6d6ee" /><path d="M3 3h12v15H3z" fill="#3f68b5" /><path d="M16 5h3M16 8h3M16 11h3M16 14h3M16 17h3" stroke="#5c7fc0" />
        <path d="M4 6l2.500 10L10 7l1.500 9L17 5" stroke="#fff" strokeWidth="2" fill="none" />
      </svg>
    ),
  },
  {
    name: 'Excel',
    icon: (
      <svg width="22" height="22" viewBox="0 0 22 22">
        <path d="M0 0h22v22H0z" fill="#4b8a3c" /><path d="M1.500 1.500h19v19h-19z" fill="#e3f0dd" /><path d="M4 4h14v14H4z" fill="#8fc087" />
        <path d="M5 5l10 12M16 5L5 17" stroke="#256b2c" strokeWidth="3.500" fill="none" />
      </svg>
    ),
  },
  {
    name: 'Opera',
    icon: (
      <svg width="23" height="23" viewBox="0 0 24 24">
        <path fillRule="evenodd" d="M12 0a12 12 0 1 0 0 24 12 12 0 0 0 0-24zm0 3.500c3 0 4.800 4 4.800 8.500s-1.800 8.500-4.800 8.500S7.200 16.500 7.200 12 9 3.500 12 3.500z" fill="#e3182d" />
      </svg>
    ),
  },
  {
    name: 'Firefox',
    icon: (
      <svg width="23" height="24" viewBox="0 0 24 24">
        <circle cx="12" cy="13" r="11" fill="#ff8a16" />
        <path d="M12 24C4 24 0 18 1 11c1-4 2-6 4-7 0 2 1 3 3 3-3 6 0 12 8 12-1 3-2 5-4 5z" fill="#f5315d" />
        <path d="M15 1c6 3 9 8 8 14-1 5-6 9-11 9 6-3 8-8 6-12z" fill="#ffdf3a" />
        <circle cx="12" cy="12" r="5" fill="#2561d8" /><path d="M6 9l5 1 2 2-3 1c1 2 4 2 5 1-1 4-9 4-9-5z" fill="#ffab28" />
      </svg>
    ),
  },
  {
    name: 'Chrome',
    active: true,
    icon: (
      <svg width="25" height="26" viewBox="0 0 25 26">
        <circle cx="12" cy="12" r="11" fill="#f9c939" />
        <path d="M2.500 6.500A11 11 0 0 1 21.500 6.500H12L7 14z" fill="#dc4437" />
        <path d="M2.500 6.500A11 11 0 0 0 12 23l5-8-9 0z" fill="#1c9d58" />
        <circle cx="12" cy="12" r="5" fill="#fff" /><circle cx="12" cy="12" r="4" fill="#4285f4" />
        <path d="M13 16l3-3h5l1 3-1 2h-6z" fill="#1c1c1c" /><path d="M15 18h5l1 3 3 3-4 2h-5l-1-4z" fill="#e4b456" /><path d="M14 22l3 1v3h-3z" fill="#35599f" />
      </svg>
    ),
  },
  {
    name: 'Блокнот',
    open: true,
    icon: (
      <svg width="24" height="24" viewBox="0 0 24 24">
        <path d="M21 3l2 16-4 3-4-2z" fill="#b79a63" />
        <path d="M8 2l13 1-2 18-17-3z" fill="#a9d8e0" />
        <path d="M8 2l-7 14 8 4 4-17z" fill="#3f8fa3" /><path d="M11 2l9 1-3 17-8-1z" fill="#c3e6ec" />
        <path d="M12 4l3 0-3 14-2 0z" fill="#eaf7f9" />
      </svg>
    ),
  },
];

function Taskbar() {
  return (
    <footer className="flex h-10 shrink-0 bg-[linear-gradient(to_right,#0a1c26_0%,#10191c_14%,#1f1f1c_30%,#22221e_50%,#11161b_66%,#1b1c1c_80%,#191a18_100%)] text-white">
      <div className="flex gap-px">
        {TASKS.map((t) => (
          <button
            key={t.name}
            type="button"
            aria-label={t.name}
            className={
              t.active
                ? 'flex w-12 items-center justify-center border-b-2 border-[#76b9ed] bg-[#4b4a47] pt-0.5'
                : t.open
                  ? 'mx-1 flex w-10 items-center justify-center border-b-2 border-[#76b9ed] pt-0.5'
                  : 'flex w-12 items-center justify-center'
            }
          >
            {t.icon}
          </button>
        ))}
      </div>
      <div className="ml-auto flex items-center">
        <button type="button" aria-label="Скрытые значки">
          <svg width="12" height="8" viewBox="0 0 12 8" fill="none" stroke="#fff" strokeWidth="1.200"><path d="M.5 7L6 1.500 11.500 7" /></svg>
        </button>
        <svg width="17" height="13" viewBox="0 0 17 13" className="ml-2.5" fill="none" stroke="#fff">
          <path d="M6 3.500h9.500v8H5M16.500 6v3M2 0v3M5 0v3M.5 3h6v1c0 3-6 3-6 0zM3.500 6v5" /><path d="M8 5.500h6v4H6v-2z" fill="#fff" />
        </svg>
        <svg width="14" height="14" viewBox="0 0 14 14" className="ml-2.5" fill="none" stroke="#fff">
          <path d="M1 13C1 6 6 1 13 1M4 13c0-5 4-9 9-9M7 13c0-3 2.500-6 6-6" opacity=".85" /><path d="M13 10a3 3 0 0 0-3 3" strokeWidth="2" />
        </svg>
        <svg width="17" height="14" viewBox="0 0 17 14" className="ml-2" fill="none" stroke="#fff">
          <path d="M1 4.500h2.500L7 1.500v11L3.500 9.500H1zM9 5c1 1 1 3 0 4M11 3c2 2 2 6 0 8" /><path d="M13.500 1.500c3 3 3 8 0 11" opacity=".5" />
        </svg>
        <button type="button" className="ml-2 text-[12px]">ENG</button>
        <div className="ml-3 w-14 text-center text-[11px] leading-[18px]">
          <div>18:16</div>
          <div>29.09.2019</div>
        </div>
        <button type="button" aria-label="Уведомления" className="ml-[17px]">
          <svg width="16" height="17" viewBox="0 0 16 17" fill="none" stroke="#fff"><path d="M.5 1.500h15v11h-5L8 15.500l-2.500-3h-5z" /></svg>
        </button>
        <span className="ml-5 mr-1 h-10 w-px bg-[#5b5c5c]" />
      </div>
    </footer>
  );
}

export default function App() {
  return (
    <div className="flex h-screen flex-col overflow-hidden bg-white font-['Open_Sans',sans-serif]">
      <TabStrip />
      <AddressBar />
      <BookmarksBar />
      <DocHeader />
      <div className="flex min-h-0 flex-1">
        <main className="flex min-w-0 flex-1 flex-col">
          <Toolbar />
          <FormulaBar />
          <div className="flex min-h-0 flex-1">
            <Grid />
            <VerticalScroll />
          </div>
          <HorizontalScroll />
          <SheetBar />
        </main>
        <SidePanel />
      </div>
      <Taskbar />
    </div>
  );
}
